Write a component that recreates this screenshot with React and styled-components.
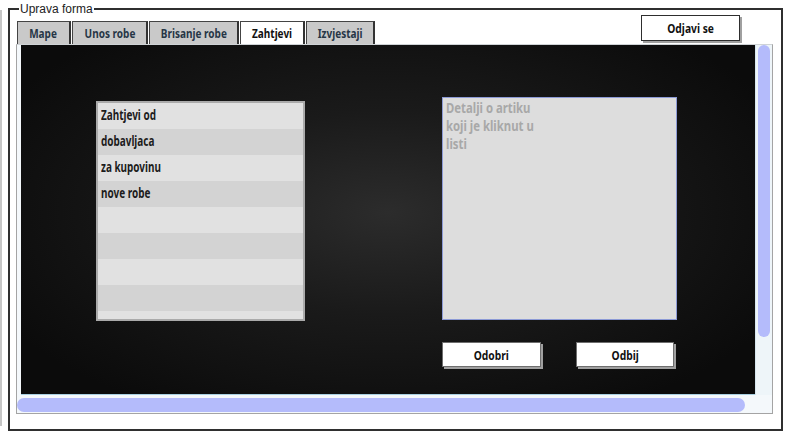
import React from 'react';
import styled, { createGlobalStyle } from 'styled-components';

const GlobalStyle = createGlobalStyle`
  html, body {
    margin: 0;
    padding: 0;
    background: #ffffff;
  }
  body {
    font-family: "Liberation Sans", Arial, sans-serif;
  }
`;

// the mockup uses a condensed humanist face; Noto Sans squeezed horizontally stands in for it
const narrow = `"Noto Sans", "DejaVu Sans", sans-serif`;

const Squeeze = styled.span`
  display: inline-block;
  white-space: nowrap;
  transform: scaleX(${p => p.$sx || 0.77});
  transform-origin: ${p => p.$origin || 'center'};
`;

const Page = styled.div`
  display: flex;
  width: 789px;
  height: 436px;
  padding-top: 3px;
  box-sizing: border-box;
  overflow: hidden;
`;

const Rail = styled.div`
  width: 2px;
  height: 416px;
  margin-top: 7px;
  background: #c6c6c6;
`;

const Frame = styled.fieldset`
  box-sizing: border-box;
  width: 775px;
  height: 428px;
  margin: 0 0 0 6px;
  padding: 0 8px 15px 6px;
  border: 2px solid #2f2f2f;
  display: flex;
  flex-direction: column;
`;

const Legend = styled.legend`
  margin-left: 3px;
  padding: 0 1px;
  font-size: 12px;
  line-height: 12px;
  color: #222;
`;

const TopBar = styled.div`
  display: flex;
  justify-content: space-between;
  height: 29px;
`;

const Tabs = styled.div`
  display: flex;
  align-self: flex-end;
  margin-left: 1px;
`;

const Tab = styled.div`
  box-sizing: border-box;
  width: ${p => p.$w}px;
  height: 23px;
  margin-right: 1px;
  border: 1px solid #444;
  border-right: 2px solid #333;
  border-bottom: none;
  background: ${p => (p.$active ? '#ffffff' : '#c9c9c9')};
  color: ${p => (p.$active ? '#111' : '#263646')};
  font-family: ${narrow};
  font-weight: bold;
  font-size: 13px;
  display: flex;
  align-items: center;
  justify-content: center;
`;

const Button = styled.button`
  box-sizing: border-box;
  width: ${p => p.$w}px;
  height: ${p => p.$h || 25}px;
  padding: 0;
  background: #ffffff;
  border: 1px solid ${p => p.$dark ? '#2e2e2e' : '#6e6e6e'};
  box-shadow: 2px 2px 0 #a0a0a0;
  font-family: ${narrow};
  font-weight: bold;
  font-size: 13px;
  color: #111;
`;

const LogoutButton = styled(Button)`
  margin-right: 33px;
`;

const Panel = styled.div`
  box-sizing: border-box;
  height: 370px;
  display: grid;
  grid-template-columns: 1fr 17px;
  grid-template-rows: 1fr 18px;
  border: 1px solid #a4a4a4;
  border-top-color: #cfd3d6;
  background: #f4f8fb;
`;

const Viewport = styled.div`
  margin-left: 4px;
  background: radial-gradient(ellipse 60% 65% at 50% 48%, #2c2c2c 0%, #1a1a1a 45%, #0b0b0b 100%);
  display: flex;
  padding: 56px 0 0 75px;
  box-sizing: border-box;
  border-bottom: 1px solid #a8cfe0;
`;

const VTrack = styled.div`
  border-left: 1px solid #d7e6ee;
  background: #eef5f9;
  padding: 0 2px 58px 2px;
  display: flex;
`;

const VThumb = styled.div`
  flex: 1;
  border-radius: 6px;
  background: #b4bbfb;
`;

const HTrack = styled.div`
  grid-column: 1 / 3;
  padding: 3px 27px 1px 0;
  display: flex;
`;

const HThumb = styled.div`
  flex: 1;
  border-radius: 7px;
  background: #b4bbfb;
`;

const List = styled.div`
  box-sizing: border-box;
  width: 209px;
  height: 220px;
  border: 2px solid #aaaaaa;
  overflow: hidden;
`;

const Row = styled.div`
  height: 26px;
  padding-left: 3px;
  background: ${p => (p.$odd ? '#d3d3d3' : '#e1e1e1')};
  font-family: ${narrow};
  font-weight: bold;
  font-size: 14px;
  line-height: 23px;
  color: #1c1c1c;
`;

const RightColumn = styled.div`
  margin-left: 137px;
  margin-top: -4px;
  display: flex;
  flex-direction: column;
`;

const Details = styled.div`
  box-sizing: border-box;
  width: 235px;
  height: 223px;
  padding: 1px 3px;
  background: #dddddd;
  border: 1px solid #8c9ad6;
  font-family: ${narrow};
  font-weight: bold;
  font-size: 14px;
  line-height: 18px;
  color: #a8a8a8;
`;

const Actions = styled.div`
  display: flex;
  gap: 35px;
  margin-top: 22px;
`;

const tabs = [
  { label: 'Mape', w: 54 },
  { label: 'Unos robe', w: 76 },
  { label: 'Brisanje robe', w: 90 },
  { label: 'Zahtjevi', w: 65, active: true },
  { label: 'Izvjestaji', w: 69 },
];

const rows = ['Zahtjevi od', 'dobavljaca', 'za kupovinu', 'nove robe', '', '', '', '', ''];

export default function App() {
  return (
    <>
      <GlobalStyle />
      <Page>
        <Rail />
        <Frame>
          <Legend>Uprava forma</Legend>
          <TopBar>
            <Tabs>
              {tabs.map(t => (
                <Tab key={t.label} $w={t.w} $active={t.active}>
                  <Squeeze>{t.label}</Squeeze>
                </Tab>
              ))}
            </Tabs>
            <LogoutButton $w={99} $h={26} $dark>
              <Squeeze $sx={0.79}>Odjavi se</Squeeze>
            </LogoutButton>
          </TopBar>
          <Panel>
            <Viewport>
              <List>
                {rows.map((r, i) => (
                  <Row key={i} $odd={i % 2 === 1}>
                    <Squeeze $sx={0.71} $origin="left">{r}</Squeeze>
                  </Row>
                ))}
              </List>
              <RightColumn>
                <Details>
                  <Squeeze $sx={0.81} $origin="left top">
                    Detalji o artiku<br />
                    koji je kliknut u<br />
                    listi
                  </Squeeze>
                </Details>
                <Actions>
                  <Button $w={99}><Squeeze $sx={0.79}>Odobri</Squeeze></Button>
                  <Button $w={98}><Squeeze $sx={0.79}>Odbij</Squeeze></Button>
                </Actions>
              </RightColumn>
            </Viewport>
            <VTrack>
              <VThumb />
            </VTrack>
            <HTrack>
              <HThumb />
            </HTrack>
          </Panel>
        </Frame>
      </Page>
    </>
  );
}
